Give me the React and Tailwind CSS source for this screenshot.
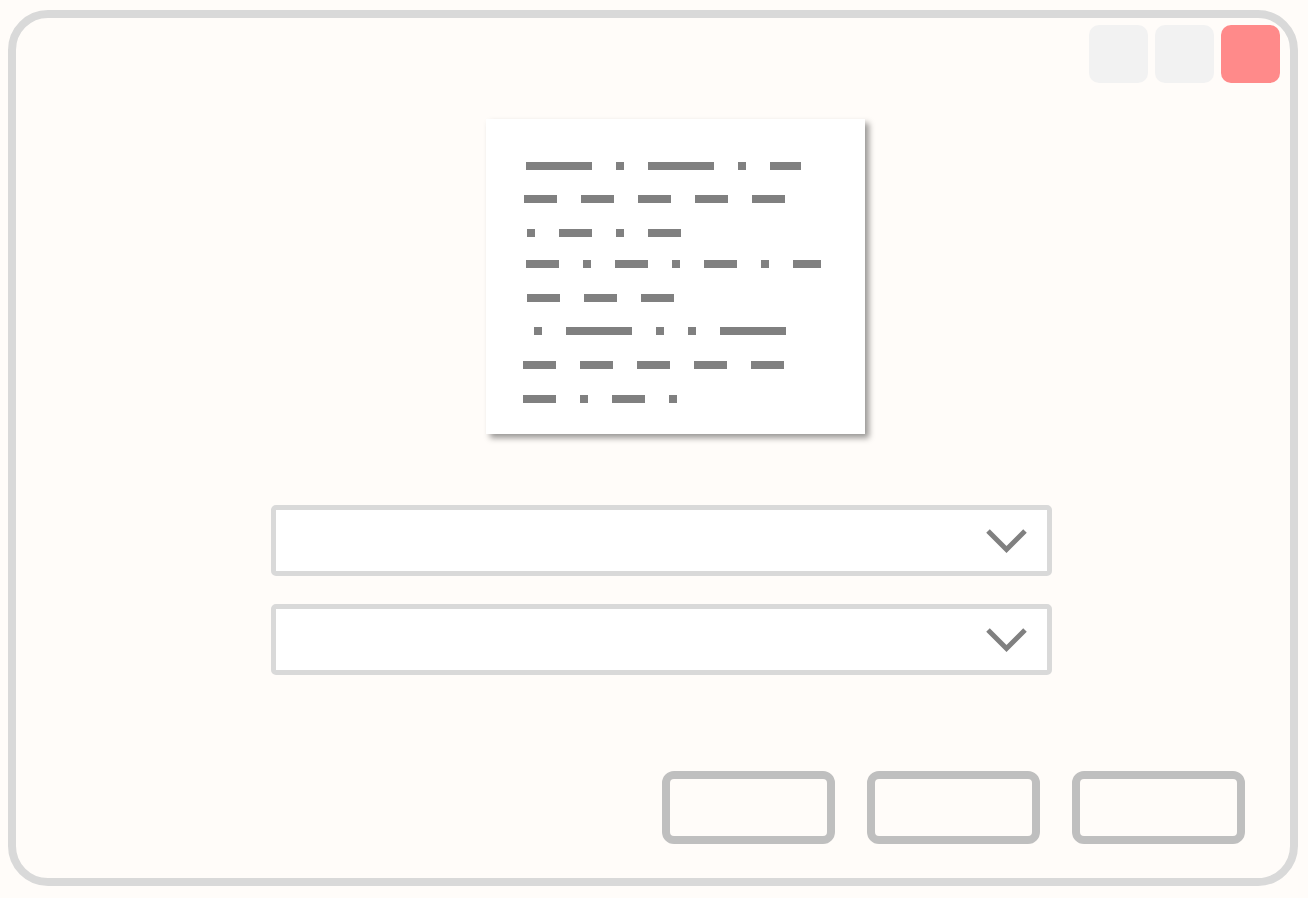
import React from "react";

const L = "w-[66px]";
const S = "w-[8px]";
const M = "w-[33px]";

// each row of the "redacted" note: left offset, top margin, dash widths
const rows = [
  { cls: "ml-[40px] mt-[43px]", dashes: [L, S, L, S, "w-[31px]"] },
  { cls: "ml-[38px] mt-[25px]", dashes: [M, M, M, M, M] },
  { cls: "ml-[41px] mt-[26px]", dashes: [S, M, S, M] },
  { cls: "ml-[40px] mt-[23px]", dashes: [M, S, M, S, M, S, "w-[28px]"] },
  { cls: "ml-[41px] mt-[26px]", dashes: [M, M, M] },
  { cls: "ml-[48px] mt-[25px]", dashes: [S, L, S, S, L] },
  { cls: "ml-[37px] mt-[26px]", dashes: [M, M, M, M, M] },
  { cls: "ml-[37px] mt-[26px]", dashes: [M, S, M, S] },
];

function Chevron() {
  return (
    <svg width="41" height="26" viewBox="0 0 41 26" className="shrink-0">
      <path d="M2 3 L20.5 21.5 L39 3" fill="none" stroke="#808080" strokeWidth="5" />
    </svg>
  );
}

function Select() {
  return (
    <div className="w-[781px] h-[71px] ml-[255px] bg-white border-[5px] border-[#d9d9d9] rounded-[5px] flex items-center justify-end pr-[20px]">
      <Chevron />
    </div>
  );
}

export default function App() {
  return (
    <div className="w-[1308px] h-[898px] bg-[#fffcf9] pt-[10px] pl-[8px] font-['Liberation_Sans',sans-serif]">
      <div className="w-[1290px] h-[876px] border-8 border-[#d9d9d9] rounded-[40px] bg-[#fffcf9] flex flex-col">
        {/* window buttons */}
        <div className="flex justify-end gap-[7px] pt-[7px] pr-[10px]">
          <div className="w-[59px] h-[58px] rounded-[10px] bg-[#f2f2f2]" />
          <div className="w-[59px] h-[58px] rounded-[10px] bg-[#f2f2f2]" />
          <div className="w-[59px] h-[58px] rounded-[10px] bg-[#ff8a8a]" />
        </div>

        {/* note card */}
        <div className="mt-[36px] ml-[470px] w-[379px] h-[315px] bg-white shadow-[4px_4px_6px_rgba(0,0,0,0.4)] flex flex-col">
          {rows.map((row, i) => (
            <div key={i} className={"flex gap-6 " + row.cls}>
              {row.dashes.map((w, j) => (
                <span key={j} className={"h-[8px] bg-[#808080] " + w} />
              ))}
            </div>
          ))}
        </div>

        <div className="mt-[71px] flex flex-col gap-[28px]">
          <Select />
          <Select />
        </div>

        {/* action buttons */}
        <div className="mt-[96px] flex justify-end gap-[32px] pr-[45px]">
          <button className="w-[173px] h-[73px] border-8 border-[#bfbfbf] rounded-[12px] bg-[#fffcf9]" />
          <button className="w-[173px] h-[73px] border-8 border-[#bfbfbf] rounded-[12px] bg-[#fffcf9]" />
          <button className="w-[173px] h-[73px] border-8 border-[#bfbfbf] rounded-[12px] bg-[#fffcf9]" />
        </div>
      </div>
    </div>
  );
}
